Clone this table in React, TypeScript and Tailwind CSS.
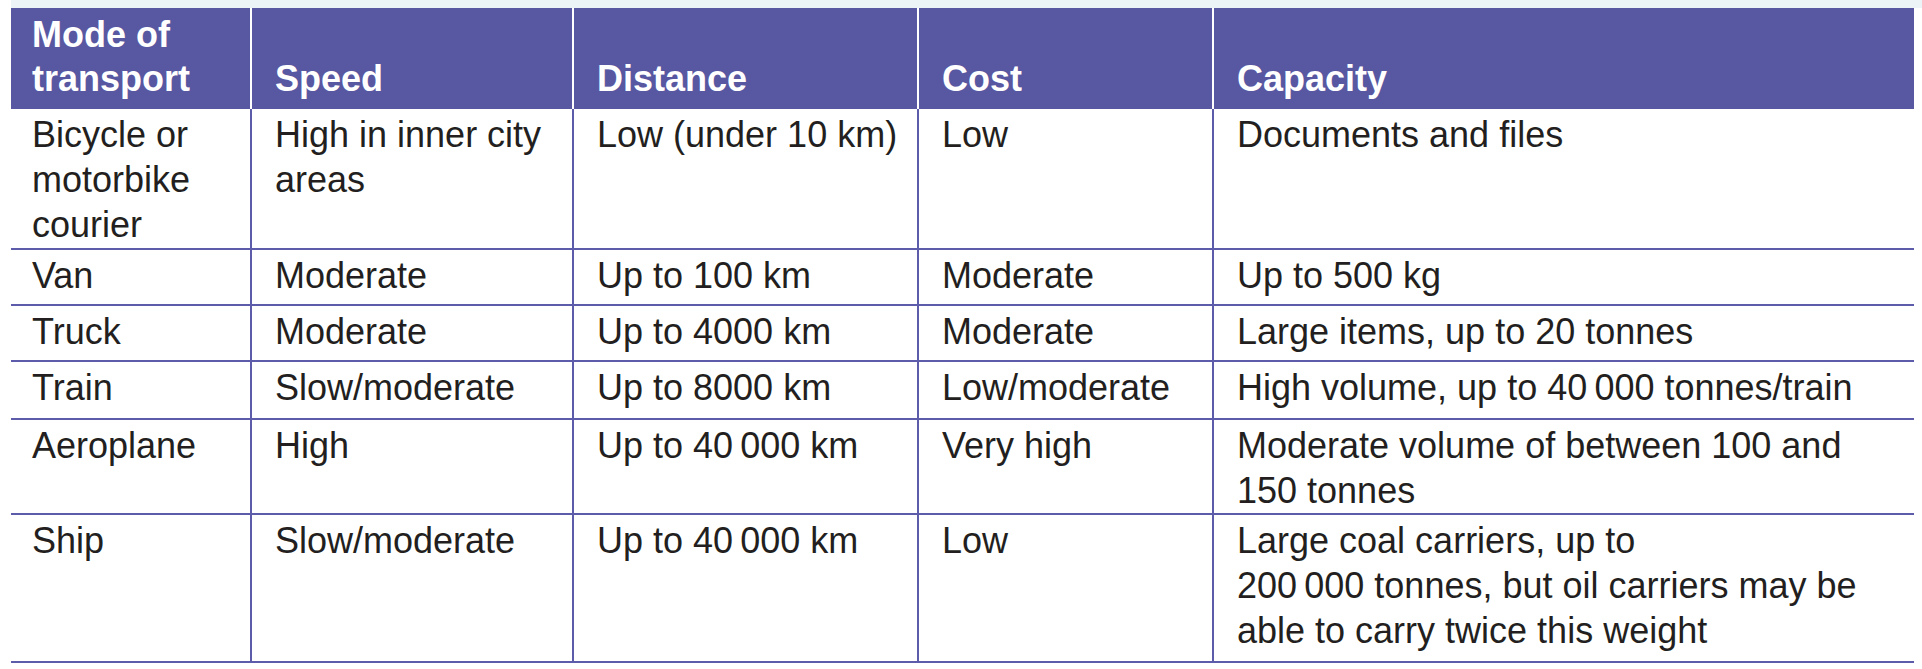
import React from "react";

type Row = {
  mode: string;
  speed: string;
  distance: string;
  cost: string;
  capacity: React.ReactNode;
  height: string;
};

// narrow no-break space, as in "40 000"
const nb = "\u202F";

const rows: Row[] = [
  {
    mode: "Bicycle or motorbike courier",
    speed: "High in inner city areas",
    distance: "Low (under 10 km)",
    cost: "Low",
    capacity: "Documents and files",
    height: "h-[141px]",
  },
  {
    mode: "Van",
    speed: "Moderate",
    distance: "Up to 100 km",
    cost: "Moderate",
    capacity: "Up to 500 kg",
    height: "h-[56px]",
  },
  {
    mode: "Truck",
    speed: "Moderate",
    distance: "Up to 4000 km",
    cost: "Moderate",
    capacity: "Large items, up to 20 tonnes",
    height: "h-[56px]",
  },
  {
    mode: "Train",
    speed: "Slow/moderate",
    distance: "Up to 8000 km",
    cost: "Low/moderate",
    capacity: `High volume, up to 40${nb}000 tonnes/train`,
    height: "h-[58px]",
  },
  {
    mode: "Aeroplane",
    speed: "High",
    distance: `Up to 40${nb}000 km`,
    cost: "Very high",
    capacity: "Moderate volume of between 100 and 150 tonnes",
    height: "h-[95px]",
  },
  {
    mode: "Ship",
    speed: "Slow/moderate",
    distance: `Up to 40${nb}000 km`,
    cost: "Low",
    capacity: (
      <>
        Large coal carriers, up to
        <br />
        {`200${nb}000 tonnes, but oil carriers may be able to carry twice this weight`}
      </>
    ),
    height: "h-[148px]",
  },
];

const headers = ["Mode of transport", "Speed", "Distance", "Cost", "Capacity"];

export default function App() {
  return (
    <div className="min-h-screen bg-white font-['Liberation_Sans',Arial,sans-serif]">
      {/* thin tinted strip above the table */}
      <div className="ml-[11px] h-[8px] bg-[#edf4f8]" />

      <table className="ml-[11px] w-[1903px] table-fixed border-separate border-spacing-0 text-[36px] text-[#231f20]">
        <colgroup>
          <col className="w-[239px]" />
          <col className="w-[322px]" />
          <col className="w-[345px]" />
          <col className="w-[295px]" />
          <col className="w-[702px]" />
        </colgroup>
        <thead>
          <tr className="h-[101px] bg-[#5857a1]">
            {headers.map((h, i) => (
              <th
                key={h}
                className={
                  i === 0
                    ? "pl-[21px] pr-[8px] pb-[8px] text-left align-bottom font-bold leading-[44px] text-white"
                    : "border-l-2 border-white pl-[23px] pr-[8px] pb-[8px] text-left align-bottom font-bold leading-[44px] text-white"
                }
              >
                {h}
              </th>
            ))}
          </tr>
        </thead>
        <tbody>
          {rows.map((r) => {
            const cells: React.ReactNode[] = [r.mode, r.speed, r.distance, r.cost, r.capacity];
            return (
              <tr key={r.mode} className={r.height}>
                {cells.map((c, i) => (
                  <td
                    key={i}
                    className={
                      i === 0
                        ? "border-b-2 border-[#5c5caa] pl-[21px] pr-[8px] pt-[3px] align-top leading-[45px]"
                        : i === 4
                        ? "border-b-2 border-l-2 border-[#5c5caa] pl-[23px] pr-[23px] pt-[3px] align-top leading-[45px]"
                        : "border-b-2 border-l-2 border-[#5c5caa] pl-[23px] pr-[8px] pt-[3px] align-top leading-[45px]"
                    }
                  >
                    {c}
                  </td>
                ))}
              </tr>
            );
          })}
        </tbody>
      </table>
    </div>
  );
}
